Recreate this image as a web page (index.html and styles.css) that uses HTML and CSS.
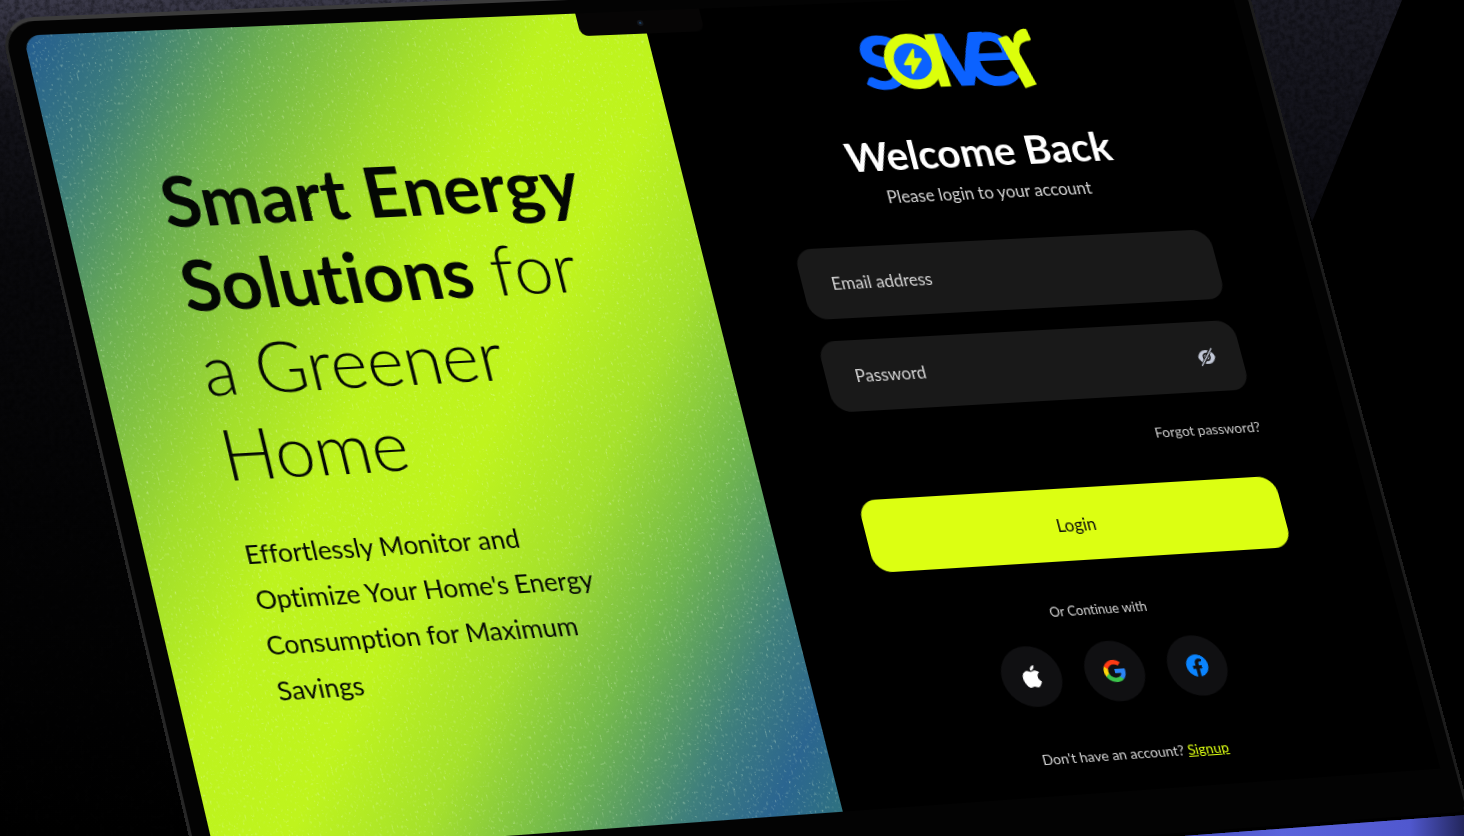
FILE: index.html
```html
<!DOCTYPE html>
<html lang="en">
<head>
<meta charset="utf-8">
<meta name="viewport" content="width=device-width, initial-scale=1">
<title>Saver – Login</title>
<link rel="stylesheet" href="styles.css">
</head>
<body>
<svg class="backdrop" viewBox="0 0 1464 836" preserveAspectRatio="none" aria-hidden="true">
  <defs>
    <linearGradient id="wall" x1="0" y1="0" x2="0" y2="1">
      <stop offset="0" stop-color="#3b3a4a"/><stop offset=".12" stop-color="#14141b"/><stop offset=".3" stop-color="#09090c"/><stop offset=".6" stop-color="#040405"/><stop offset="1" stop-color="#010101"/>
    </linearGradient>
    <linearGradient id="wedge" x1="0" y1="0" x2="0" y2="1">
      <stop offset="0" stop-color="#1b1b25"/><stop offset="1" stop-color="#0c0c12"/>
    </linearGradient>
    <linearGradient id="glow" x1="0" y1="0" x2="1" y2="0">
      <stop offset="0" stop-color="#3d43a8"/><stop offset=".5" stop-color="#5a63dc"/><stop offset=".85" stop-color="#5058cf"/><stop offset="1" stop-color="#23265c"/>
    </linearGradient>
    <filter id="concrete" x="0" y="0" width="100%" height="100%">
      <feTurbulence type="fractalNoise" baseFrequency=".2" numOctaves="4" seed="4"/>
      <feColorMatrix values="0 0 0 0 0  0 0 0 0 0  0 0 0 0 0  2 0 0 0 -.7"/>
    </filter>
  </defs>
  <rect width="1464" height="836" fill="#000"/>
  <rect width="700" height="836" fill="url(#wall)"/>
  <path d="M1240 0H1402L1312 222Z" fill="url(#wedge)"/>
  <rect width="1464" height="836" filter="url(#concrete)" opacity=".4"/>
  <path d="M1100 842L1464 815V836H1100Z" fill="url(#glow)"/>
</svg>

<div class="stage">
  <div class="device">
    <main class="screen">
      <section class="hero">
        <svg class="grain" aria-hidden="true">
          <filter id="specks" x="0" y="0" width="100%" height="100%">
            <feTurbulence type="fractalNoise" baseFrequency=".45 .3" numOctaves="3" seed="9"/>
            <feColorMatrix values="0 0 0 0 .8  0 0 0 0 1  0 0 0 0 .7  4 0 0 0 -2.500"/>
          </filter>
          <rect width="100%" height="100%" filter="url(#specks)"/>
        </svg>
        <h1 class="headline"><strong>Smart Energy<br>Solutions</strong> for<br>a Greener<br>Home</h1>
        <p class="lead">Effortlessly Monitor and<br>Optimize Your Home's Energy<br>Consumption for Maximum<br>Savings</p>
      </section>

      <section class="login">
        <svg class="logo" viewBox="0 0 172 64" role="img" aria-label="saver">
          <g class="logo-text">
            <text x="0" y="57" fill="#0b62ff">s</text>
            <text x="71" y="57" fill="#0b62ff" font-weight="900">v</text>
            <text x="99" y="58" fill="#0b62ff">e</text>
            <text x="144" y="62" fill="#dcff0b" transform="rotate(-16 150 60)">r</text>
          </g>
          <circle cx="51" cy="32" r="22" fill="#0b62ff" stroke="#dcff0b" stroke-width="9"/>
          <path d="M68 7H78L81 57H71Z" fill="#dcff0b"/>
          <path d="M54 21L43 34.500H50L48 43L59 30H52Z" fill="#dcff0b" stroke="#dcff0b" stroke-width="2" stroke-linejoin="round"/>
        </svg>
        <h2 class="title">Welcome Back</h2>
        <p class="subtitle">Please login to your account</p>

        <form class="form">
          <div class="field">
            <label for="email">Email address</label>
            <input id="email" type="email" autocomplete="email">
          </div>
          <div class="field">
            <label for="password">Password</label>
            <input id="password" type="password" autocomplete="current-password">
            <button class="reveal" type="button" aria-label="Show password">
              <svg viewBox="0 0 24 24" width="20" height="20">
                <path d="M12 3.500C6.500 3.500 3 7.500 1.500 12 3 16.500 6.500 20.500 12 20.500S21 16.500 22.500 12C21 7.500 17.500 3.500 12 3.500Z" fill="#c3c9d8"/>
                <circle cx="12" cy="12" r="4" fill="#c3c9d8" stroke="#191919" stroke-width="2"/>
                <path d="M20 1L4 23" stroke="#191919" stroke-width="4"/>
                <path d="M20 2L4 22" stroke="#c3c9d8" stroke-width="1.500" stroke-linecap="round"/>
              </svg>
            </button>
          </div>
          <a class="forgot" href="#forgot">Forgot password?</a>
          <button class="submit" type="submit">Login</button>
        </form>

        <p class="alt">Or Continue with</p>
        <div class="socials">
          <button type="button" aria-label="Apple">
            <svg viewBox="0 0 24 24" width="22" height="22"><path fill="#fff" d="M12.152 6.896c-.948 0-2.415-1.078-3.960-1.040-2.040.027-3.910 1.183-4.961 3.014-2.117 3.675-.546 9.103 1.519 12.090 1.013 1.454 2.208 3.090 3.792 3.039 1.520-.065 2.090-.987 3.935-.987 1.831 0 2.350.987 3.960.948 1.637-.026 2.676-1.480 3.676-2.948 1.156-1.688 1.636-3.325 1.662-3.415-.039-.013-3.182-1.221-3.220-4.857-.026-3.040 2.480-4.494 2.597-4.559-1.429-2.090-3.623-2.324-4.390-2.376-2-.156-3.675 1.090-4.610 1.090zM15.530 3.830c.843-1.012 1.400-2.427 1.245-3.830-1.207.052-2.662.805-3.532 1.818-.780.896-1.454 2.338-1.273 3.714 1.338.104 2.715-.688 3.559-1.701"/></svg>
          </button>
          <button type="button" aria-label="Google">
            <svg viewBox="2 2 44 44" width="22" height="22">
              <path fill="#2b84f5" d="M45.120 24.500c0-1.560-.140-3.060-.400-4.500H24v8.510h11.840c-.510 2.750-2.060 5.080-4.390 6.640v5.520h7.110c4.160-3.830 6.560-9.470 6.560-16.170z"/>
              <path fill="#3bc44b" d="M24 46c5.940 0 10.920-1.970 14.560-5.330l-7.110-5.520c-1.970 1.320-4.490 2.100-7.450 2.100-5.730 0-10.580-3.870-12.310-9.070H4.340v5.700C7.960 41.070 15.400 46 24 46z"/>
              <path fill="#ffd60a" d="M11.690 28.180C11.250 26.860 11 25.450 11 24s.250-2.860.690-4.180v-5.700H4.340C2.850 17.090 2 20.450 2 24s.850 6.910 2.340 9.880l7.350-5.700z"/>
              <path fill="#ff3a14" d="M24 10.750c3.230 0 6.130 1.110 8.410 3.290l6.310-6.310C34.910 4.180 29.930 2 24 2 15.400 2 7.960 6.930 4.340 14.120l7.350 5.700c1.730-5.200 6.580-9.070 12.310-9.070z"/>
            </svg>
          </button>
          <button type="button" aria-label="Facebook">
            <svg viewBox="0 0 24 24" width="22" height="22"><path fill="#0a84ff" d="M24 12.073c0-6.627-5.373-12-12-12s-12 5.373-12 12c0 5.990 4.388 10.954 10.125 11.854v-8.385H7.078v-3.470h3.047V9.430c0-3.007 1.792-4.669 4.533-4.669 1.312 0 2.686.235 2.686.235v2.953H15.830c-1.491 0-1.956.925-1.956 1.874v2.250h3.328l-.532 3.470h-2.796v8.385C19.612 23.027 24 18.062 24 12.073z"/></svg>
          </button>
        </div>
        <p class="signup">Don't have an account? <a href="#signup">Signup</a></p>
      </section>

      <div class="notch" aria-hidden="true"><span class="camera"></span></div>
    </main>
  </div>
</div>
</body>
</html>
```
FILE: styles.css
```css
* { box-sizing: border-box; }

body {
  margin: 0;
  height: 100vh;
  overflow: hidden;
  background: #000;
  font-family: Lato, "Open Sans", sans-serif;
  font-variant-ligatures: none;
}

h1, h2, p { margin: 0; font-weight: 400; }

button, input { font: inherit; border: 0; padding: 0; background: none; }

.backdrop {
  position: fixed;
  inset: 0;
  width: 100%;
  height: 100%;
}

/* The laptop is seen in perspective; one projection covers the whole device. */
.stage {
  width: calc(100vw - 254px);
  min-width: 1120px;
  transform-origin: 0 0;
  transform: matrix3d(1.04689, -0.03942, 0, 0.00004043, 0.2338, 1.00104, 0, -0.00002873, 0, 0, 1, 0, 19, 35.5, 0, 1);
}

.device {
  margin: -18px -18px 0 -20px;
  padding: 14px 15px 44px 17px;
  border: 3px solid;
  border-color: #3b3b3b #1c1c1c #000 #262626;
  border-top-width: 4px;
  border-radius: 34px 34px 12px 12px;
  background: #030303;
}

.screen {
  position: relative;
  display: grid;
  grid-template-columns: 1fr 1fr;
  min-height: 800px;
  border-radius: 16px 16px 0 0;
  background: #000;
}

.hero {
  position: relative;
  padding: 127px 32px 32px 94px;
  overflow: hidden;
  border-radius: 16px 0 0 0;
  background: linear-gradient(127deg, #235c92 0%, #3a7a7c 9%, #6db050 20%, #a2de2c 33%, #bdf31e 43%, #bff41d 55%, #a5e12c 66%, #74ba4b 76%, #3f7f7c 87%, #2b6590 94%, #2f7280 100%);
  color: #040804;
}

.grain {
  position: absolute;
  inset: 0;
  width: 100%;
  height: 100%;
  opacity: 0.4;
}

.headline {
  position: relative;
  font-size: 68px;
  line-height: 83px;
  font-weight: 300;
}

.headline strong { font-weight: 700; }

.lead {
  position: relative;
  margin-top: 34px;
  font-size: 25px;
  line-height: 44px;
}

.login {
  display: flex;
  flex-direction: column;
  align-items: center;
  padding-top: 28px;
  color: #d4d4d4;
}

.logo {
  width: 186px;
  height: 69px;
  margin-right: 12px;
  overflow: visible;
}

.logo-text { font-size: 98px; font-weight: 700; }

.title {
  margin-top: 36px;
  color: #fff;
  font-size: 41px;
  line-height: 48px;
  font-weight: 700;
}

.subtitle {
  margin-top: 6px;
  font-size: 17px;
  line-height: 24px;
}

.form {
  display: flex;
  flex-direction: column;
  gap: 22px;
  width: 100%;
  max-width: 424px;
  margin-top: 36px;
}

.field {
  position: relative;
  display: grid;
  align-items: center;
  height: 71px;
  border-radius: 18px;
  background: #191919;
}

.field label,
.field input { grid-area: 1 / 1; }

.field label { padding-left: 30px; font-size: 17px; }

.field input {
  width: 100%;
  height: 100%;
  padding: 0 64px 0 30px;
  border-radius: 18px;
  color: #fff;
}

.reveal {
  position: absolute;
  right: 26px;
  display: flex;
}

.forgot {
  align-self: flex-end;
  margin-top: 4px;
  color: #c8c8c8;
  font-size: 14px;
  line-height: 24px;
  text-decoration: none;
}

.submit {
  height: 72px;
  margin-top: 16px;
  border-radius: 18px;
  background: #dcff12;
  color: #0a0a0a;
  font-size: 17px;
}

.alt {
  margin-top: 37px;
  font-size: 13px;
  line-height: 24px;
}

.socials { display: flex; gap: 24px; margin-top: 20px; }

.socials button {
  display: grid;
  place-items: center;
  width: 60px;
  height: 60px;
  border-radius: 50%;
  background: #101012;
}

.signup {
  margin-top: 40px;
  font-size: 14px;
  line-height: 24px;
}

.signup a { color: #dcff12; }

.notch {
  position: absolute;
  top: 0;
  left: 50%;
  display: grid;
  place-items: center;
  width: 124px;
  height: 23px;
  margin-left: -66px;
  border-radius: 0 0 8px 8px;
  background: #060505;
}

.camera {
  width: 6px;
  height: 6px;
  border: 2px solid #14181f;
  border-radius: 50%;
  background: #1d4a78;
}
```
